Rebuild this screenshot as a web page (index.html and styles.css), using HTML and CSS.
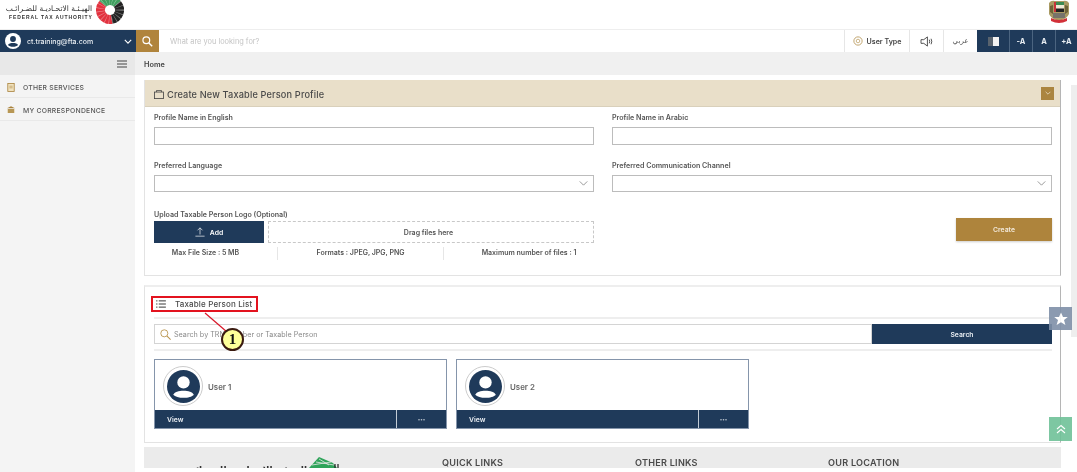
FILE: index.html
```html
<!DOCTYPE html>
<html lang="en">
<head>
<meta charset="utf-8">
<title>Create New Taxable Person Profile</title>
<link rel="stylesheet" href="styles.css">
</head>
<body>
<header class="top">
  <div class="brand">
    <div class="brand-text">
      <div class="brand-ar" dir="rtl">الهيـئـة الاتحـاديـة للضـرائـب</div>
      <div class="brand-en">FEDERAL TAX AUTHORITY</div>
    </div>
    <svg class="brand-logo" viewBox="-14 -14 28 28" width="28" height="28">
      <g fill="none" stroke-width="9">
        <path d="M-7.300 -6.100A9.500 9.500 0 0 1 7.300 -6.100" stroke="#3f9f5f"/>
        <path d="M7.300 -6.100A9.500 9.500 0 0 1 1.650 9.360" stroke="#232323"/>
        <path d="M1.650 9.360A9.500 9.500 0 0 1 -7.300 -6.100" stroke="#e2323f"/>
        <circle r="9.500" stroke="#fff" stroke-width="9.200" stroke-dasharray="0.500 2.600" opacity="0.450"/>
      </g>
      <path d="M-3.500 3L4 3.500L0 -5Z" fill="#fff"/>
    </svg>
  </div>
  <svg class="emblem" viewBox="0 0 22 24" width="22" height="24">
    <path d="M1 3Q3 0 7 1H15Q19 0 21 3L21 14Q19 19 11 21Q3 19 1 14Z" fill="#a99a63"/>
    <path d="M2 6L5 5V14L2 12ZM20 6L17 5V14L20 12Z" fill="#6d6238"/>
    <rect x="6" y="2" width="10" height="10" fill="#efe9d4"/>
    <rect x="8" y="2" width="8" height="3" fill="#3a8a52"/>
    <rect x="8" y="8.500" width="8" height="3.500" fill="#222"/>
    <rect x="6" y="2" width="2" height="10" fill="#c8323a"/>
    <rect x="5" y="13" width="12" height="5" fill="#77736a"/>
    <path d="M3 18Q11 22 19 18L19 21Q11 25 3 21Z" fill="#d23038"/>
  </svg>
</header>

<nav class="bar">
  <div class="account">
    <svg class="avatar-small" viewBox="0 0 24 24" width="16" height="16">
      <circle cx="12" cy="12" r="12" fill="#fff"/>
      <circle cx="12" cy="9" r="4.400" fill="#1f3a5a"/>
      <path d="M4.500 18C6 14 18 14 19.500 18C17 21.500 7 21.500 4.500 18Z" fill="#1f3a5a"/>
    </svg>
    <span class="account-name">ct.training@fta.com</span>
    <svg class="chev" viewBox="0 0 10 6" width="8" height="5"><path d="M1 1L5 5L9 1" fill="none" stroke="#fff" stroke-width="1.400"/></svg>
  </div>
  <div class="search-btn">
    <svg viewBox="0 0 14 14" width="11" height="11"><circle cx="5.500" cy="5.500" r="4.300" fill="none" stroke="#fff" stroke-width="1.500"/><path d="M8.800 8.800L13 13" stroke="#fff" stroke-width="1.800"/></svg>
  </div>
  <div class="search-text">What are you looking for?</div>
  <div class="tool tool-user">
    <svg viewBox="0 0 14 14" width="10" height="10"><circle cx="7" cy="7" r="5.800" fill="none" stroke="#b8985a" stroke-width="1.200"/><circle cx="7" cy="7" r="2.500" fill="none" stroke="#b8985a"/></svg>
    <span>User Type</span>
  </div>
  <div class="tool tool-sound">
    <svg viewBox="0 0 14 12" width="13" height="11"><path d="M1 4H4L8 1V11L4 8H1Z" fill="none" stroke="#333" stroke-width="0.900"/><path d="M10 4Q11 6 10 8M12 3Q13.500 6 12 9" fill="none" stroke="#333" stroke-width="0.900"/></svg>
  </div>
  <div class="tool tool-lang" dir="rtl">عربي</div>
  <div class="dark dark-contrast"><span class="contrast"></span></div>
  <div class="dark">-A</div>
  <div class="dark">A</div>
  <div class="dark dark-last">+A</div>
</nav>

<div class="layout">
  <aside class="side">
    <div class="side-toggle">
      <svg viewBox="0 0 10 8" width="10" height="8"><path d="M0 1H10M0 4H10M0 7H10" stroke="#444" stroke-width="1.100"/></svg>
    </div>
    <div class="side-item">
      <svg viewBox="0 0 10 12" width="8" height="10"><rect x="1" y="1.500" width="8" height="10" fill="#f0e2bf" stroke="#a8813a"/><path d="M3 5H7M3 7H7" stroke="#a8813a" stroke-width="0.700"/></svg>
      <span>OTHER SERVICES</span>
    </div>
    <div class="side-item">
      <svg viewBox="0 0 12 11" width="8" height="8"><path d="M6 0L12 3H0Z" fill="#a8813a"/><rect x="1" y="4" width="10" height="6" fill="#cfae6b"/><path d="M3 4V10M6 4V10M9 4V10" stroke="#8a6a2a"/></svg>
      <span>MY CORRESPONDENCE</span>
    </div>
  </aside>

  <main class="main">
    <div class="crumb">Home</div>
    <div class="content">
      <section class="panel panel-create">
        <div class="panel-head">
          <svg viewBox="0 0 12 11" width="10" height="9"><rect x="0.500" y="2.500" width="11" height="8" fill="none" stroke="#444"/><path d="M3 2.500V0.500H9V2.500" fill="none" stroke="#444"/></svg>
          <h1>Create New Taxable Person Profile</h1>
          <span class="collapse"><svg viewBox="0 0 10 6" width="6" height="4"><path d="M1 1L5 5L9 1" fill="none" stroke="#e9dfc9" stroke-width="1.300"/></svg></span>
        </div>
        <div class="form-grid">
          <div class="field">
            <label>Profile Name in English</label>
            <div class="input"></div>
          </div>
          <div class="field">
            <label>Profile Name in Arabic</label>
            <div class="input"></div>
          </div>
          <div class="field">
            <label>Preferred Language</label>
            <div class="input select"><svg viewBox="0 0 10 6" width="9" height="5"><path d="M0.500 0.500L5 5L9.500 0.500" fill="none" stroke="#666" stroke-width="0.800"/></svg></div>
          </div>
          <div class="field">
            <label>Preferred Communication Channel</label>
            <div class="input select"><svg viewBox="0 0 10 6" width="9" height="5"><path d="M0.500 0.500L5 5L9.500 0.500" fill="none" stroke="#666" stroke-width="0.800"/></svg></div>
          </div>
          <div class="field upload">
            <label>Upload Taxable Person Logo (Optional)</label>
            <div class="upload-row">
              <div class="add-btn">
                <svg viewBox="0 0 12 12" width="10" height="10"><path d="M6 9V1M3 4L6 1L9 4M0.500 11H11.500" fill="none" stroke="#fff" stroke-width="0.800"/></svg>
                <span>Add</span>
              </div>
              <div class="drop">Drag files here</div>
            </div>
            <div class="limits">
              <span>Max File Size : 5 MB</span>
              <span>Formats : JPEG, JPG, PNG</span>
              <span>Maximum number of files : 1</span>
            </div>
          </div>
          <div class="create-cell">
            <div class="create-btn">Create</div>
          </div>
        </div>
      </section>

      <section class="panel panel-list">
        <div class="list-title">
          <div class="list-box">
            <svg viewBox="0 0 11 9" width="10" height="8"><path d="M3 1H11M3 4.500H11M3 8H11" stroke="#333" stroke-width="1.100"/><path d="M0 1H1.500M0 4.500H1.500M0 8H1.500" stroke="#333" stroke-width="1.100"/></svg>
            <h2>Taxable Person List</h2>
          </div>
        </div>
        <div class="search-row">
          <div class="list-search">
            <svg viewBox="0 0 14 14" width="11" height="11"><circle cx="5.500" cy="5.500" r="4.500" fill="none" stroke="#b8924a" stroke-width="1.100"/><path d="M9 9L13.500 13.500" stroke="#b8924a" stroke-width="1.300"/></svg>
            <span>Search by TRN Number or Taxable Person</span>
          </div>
          <div class="list-search-btn">Search</div>
        </div>
        <div class="cards">
          <article class="card">
            <div class="card-body">
              <span class="ring"><svg viewBox="0 0 24 24" width="33" height="33"><circle cx="12" cy="12" r="12" fill="#1f3a5a"/><circle cx="12" cy="9" r="4.500" fill="#fff"/><path d="M4.500 18C6 14 18 14 19.500 18C17 21 7 21 4.500 18Z" fill="#fff"/></svg></span>
              <span class="user">User 1</span>
            </div>
            <div class="card-foot"><span class="view">View</span><span class="more">•••</span></div>
          </article>
          <article class="card">
            <div class="card-body">
              <span class="ring"><svg viewBox="0 0 24 24" width="33" height="33"><circle cx="12" cy="12" r="12" fill="#1f3a5a"/><circle cx="12" cy="9" r="4.500" fill="#fff"/><path d="M4.500 18C6 14 18 14 19.500 18C17 21 7 21 4.500 18Z" fill="#fff"/></svg></span>
              <span class="user">User 2</span>
            </div>
            <div class="card-foot"><span class="view">View</span><span class="more">•••</span></div>
          </article>
        </div>
      </section>

      <footer class="foot">
        <div class="foot-logo">
          <span class="foot-ar" dir="rtl">الهيـئـة الاتحـاديـة للضـرائـب</span>
          <svg viewBox="0 0 32 12" width="32" height="12"><path d="M2 12L12 1L26 7L30 12Z" fill="#2fa45a"/><path d="M5 9L24 6M9 6L27 9M12 3L22 9" stroke="#e9e9e9" stroke-width="0.800"/><path d="M28 8V12M31 8V12" stroke="#222" stroke-width="1.200"/></svg>
        </div>
        <div class="foot-col">QUICK LINKS</div>
        <div class="foot-col">OTHER LINKS</div>
        <div class="foot-col">OUR LOCATION</div>
      </footer>
    </div>
  </main>
  <div class="rail"></div>
</div>

<div class="float float-star"><svg viewBox="0 0 14 14" width="14" height="14"><path d="M7 0.500L9 5H13.800L10 8L11.400 13L7 10.200L2.600 13L4 8L0.200 5H5Z" fill="#fff"/></svg></div>
<div class="float float-up"><svg viewBox="0 0 10 10" width="10" height="10"><path d="M1 5L5 1.500L9 5M1 9L5 5.500L9 9" fill="none" stroke="#fff" stroke-width="1.100"/></svg></div>

<svg class="callout-line" viewBox="0 0 40 30" width="40" height="30"><path d="M1 1L30 26" stroke="#d8182a" stroke-width="1.200"/></svg>
<div class="callout">1</div>
</body>
</html>
```

FILE: styles.css
```css
* { box-sizing: border-box; }
html, body { margin: 0; height: 472px; overflow: hidden; background: #fff; }
body { position: relative; color: #444; font-family: Inter, "Liberation Sans", "Noto Sans", sans-serif; font-size: 7px; filter: blur(0.35px); }

.top { height: 29px; display: flex; justify-content: space-between; align-items: flex-start; padding: 0 7px 0 9px; background: #fff; overflow: hidden; }
.brand { display: flex; gap: 4px; margin-top: -4px; }
.brand-text { margin-top: 8px; width: 83px; }
.brand-ar { font-family: "DejaVu Sans", sans-serif; font-size: 7.500px; line-height: 9px; color: #333; white-space: nowrap; }
.brand-en { font-family: "Liberation Sans", sans-serif; font-size: 5px; line-height: 7px; letter-spacing: 0.900px; font-weight: 700; color: #333; white-space: nowrap; margin-top: 1px; }

.bar { height: 23px; display: flex; align-items: stretch; border-top: 1px solid #eee; background: #fff; }
.account { width: 136px; background: #1f3a5a; color: #fff; display: flex; align-items: center; padding: 0 4px 0 5px; gap: 6px; }
.account-name { flex: 1; font-size: 7px; font-weight: 500; color: #e8edf2; }
.search-btn { width: 23px; background: #b0843c; display: flex; align-items: center; justify-content: center; }
.search-text { flex: 1; padding-left: 11px; align-self: center; color: #c4c4c4; font-size: 7.400px; }
.tool { display: flex; align-items: center; justify-content: center; border-left: 1px solid #e6e6e6; }
.tool-user { width: 65px; gap: 4px; font-size: 7.100px; font-weight: 600; color: #444; }
.tool-sound { width: 34px; }
.tool-lang { width: 34px; font-family: "DejaVu Sans", sans-serif; font-size: 7px; color: #555; }
.dark { width: 23px; background: #1f3a5a; color: #e8edf2; display: flex; align-items: center; justify-content: center; font-size: 7.500px; font-weight: 700; border-left: 1px solid #4b6480; }
.dark-contrast { width: 32px; border-left: 0; }
.dark-last { width: 22px; }
.contrast { width: 11px; height: 9px; background: linear-gradient(90deg, #59636e 50%, #f2f2f2 50%); }

.layout { height: 420px; display: flex; }
.side { width: 135px; flex: none; background: #f4f4f4; }
.side-toggle { height: 23px; background: #e8e8e8; display: flex; align-items: center; justify-content: flex-end; padding-right: 8px; }
.side-item { height: 23px; padding: 2px 0 0 7px; display: flex; align-items: center; gap: 8px; border-bottom: 1px solid #e9e9e9; font-size: 6.800px; font-weight: 500; color: #555; letter-spacing: 0.250px; white-space: nowrap; }

.main { flex: 1; min-width: 0; background: #fff; }
.crumb { height: 23px; background: #f0f0f0; padding: 1px 0 0 9px; display: flex; align-items: center; font-size: 7.300px; font-weight: 600; color: #444; }
.content { width: 917px; margin: 5px 0 0 9px; display: flex; flex-direction: column; }

.panel { background: #fff; border: 1px solid #e3e3e3; border-right-color: #b5b5b5; }
.panel-create { height: 196px; border-top: 0; }
.panel-head { height: 27px; background: #e9dfc9; display: flex; align-items: center; padding: 2px 6px 0 9px; gap: 3px; border-bottom: 1px solid #d9d0bb; }
.panel-head h1 { margin: 0; flex: 1; font-size: 9.200px; font-weight: 500; color: #4a4a4a; letter-spacing: 0.150px; }
.collapse { width: 13px; height: 13px; margin-top: -2px; background: #ab853f; display: flex; align-items: center; justify-content: center; }

.form-grid { display: grid; grid-template-columns: 440px 440px; column-gap: 18px; padding: 7px 0 0 9px; }
.field { height: 48px; }
.field label { display: block; height: 14px; margin-top: -1px; font-size: 7.100px; font-weight: 600; color: #555; white-space: nowrap; }
.input { height: 18px; border: 1px solid #bcbcbc; display: flex; align-items: center; justify-content: flex-end; padding-right: 5px; background: #fff; }
.select { height: 17px; }
.upload { height: auto; }
.upload label { height: 11px; margin-top: 0; }
.upload-row { display: flex; gap: 4px; height: 22px; }
.add-btn { width: 110px; background: #1f3a5a; color: #fff; display: flex; align-items: center; justify-content: center; gap: 5px; font-size: 6.800px; font-weight: 600; }
.drop { flex: 1; padding-right: 5px; border: 1px dashed #c8c8c8; display: flex; align-items: center; justify-content: center; font-size: 7px; font-weight: 600; color: #555; }
.limits { display: grid; grid-template-columns: 123px 166px 1fr; margin-top: 4px; font-size: 7px; font-weight: 600; color: #555; text-align: center; }
.limits span { border-left: 1px solid #e6e6e6; padding: 1px 0 3px; white-space: nowrap; }
.limits span:first-child { border-left: 0; padding-right: 20px; }
.limits span:last-child { padding-left: 20px; }
.create-cell { display: flex; justify-content: flex-end; padding: 8px 0 0; }
.create-btn { width: 96px; height: 23px; background: #ae843c; color: #f3eadb; display: flex; align-items: center; justify-content: center; font-size: 6.800px; font-weight: 600; box-shadow: 0 1px 2px rgba(0,0,0,.2); }

.panel-list { height: 158px; margin-top: 9px; border-top: 2px solid #eee; padding: 9px 8px 0 9px; }
.list-title { height: 23px; border-bottom: 2px solid #eee; margin-bottom: 5px; }
.list-box { width: 107px; height: 16px; margin-left: -3px; border: 2px solid #e3131f; display: flex; align-items: center; gap: 9px; padding-left: 3px; }
.list-box h2 { margin: 0; font-size: 8px; font-weight: 500; color: #4a4a4a; white-space: nowrap; letter-spacing: 0.150px; }
.search-row { display: flex; height: 20px; }
.list-search { flex: 1; border: 1px solid #d4d4d4; display: flex; align-items: center; gap: 3px; padding-left: 5px; font-size: 7.200px; color: #8a8a8a; }
.list-search-btn { width: 180px; background: #1f3a5a; color: #e8edf2; display: flex; align-items: center; justify-content: center; font-size: 6.800px; font-weight: 600; }
.cards { border-top: 2px solid #eee; margin-top: 5px; padding-top: 8px; display: flex; gap: 9px; }
.card { width: 293px; height: 70px; border: 1px solid #8595ab; display: flex; flex-direction: column; }
.card-body { flex: 1; display: flex; align-items: center; padding: 2px 0 0 8px; gap: 5px; }
.ring { width: 40px; height: 40px; border-radius: 50%; border: 1px solid #ccc; display: flex; align-items: center; justify-content: center; }
.user { margin-top: 1px; font-size: 7.900px; font-weight: 600; color: #666; }
.card-foot { height: 18px; background: #1f3a5a; color: #e8edf2; display: flex; align-items: center; font-size: 6.800px; font-weight: 600; }
.view { flex: 1; padding-left: 12px; }
.more { width: 50px; height: 18px; border-left: 1px solid #c3ccd6; display: flex; align-items: center; justify-content: center; font-size: 5px; color: #bbc5cf; }

.foot { height: 21px; margin-top: 4px; background: #ebebeb; display: flex; padding-top: 10px; overflow: hidden; font-size: 9.100px; font-weight: 600; color: #4a4a4a; }
.foot-logo { width: 298px; margin-top: -1px; padding-right: 103px; display: flex; justify-content: flex-end; }
.foot-ar { font-family: "DejaVu Sans", sans-serif; font-size: 9px; line-height: 28px; color: #333; white-space: nowrap; }
.foot-col { width: 193px; letter-spacing: 0.250px; }

.rail { position: absolute; right: 0; top: 85px; width: 6px; height: 252px; background: #eeeeee; }
.float { position: absolute; left: 1049px; width: 23px; height: 23px; display: flex; align-items: center; justify-content: center; opacity: 0.9; }
.float-star { top: 307px; background: #7f90a8; }
.float-up { top: 417px; height: 24px; background: #6fc298; }

.callout-line { position: absolute; left: 204px; top: 312px; }
.callout { position: absolute; left: 221px; top: 328px; width: 23px; height: 23px; border-radius: 50%; border: 2px solid #3a1a10; background: #ffff9a; color: #111; font-family: "Liberation Serif", serif; font-size: 15px; font-weight: 700; display: flex; align-items: center; justify-content: center; }
```
